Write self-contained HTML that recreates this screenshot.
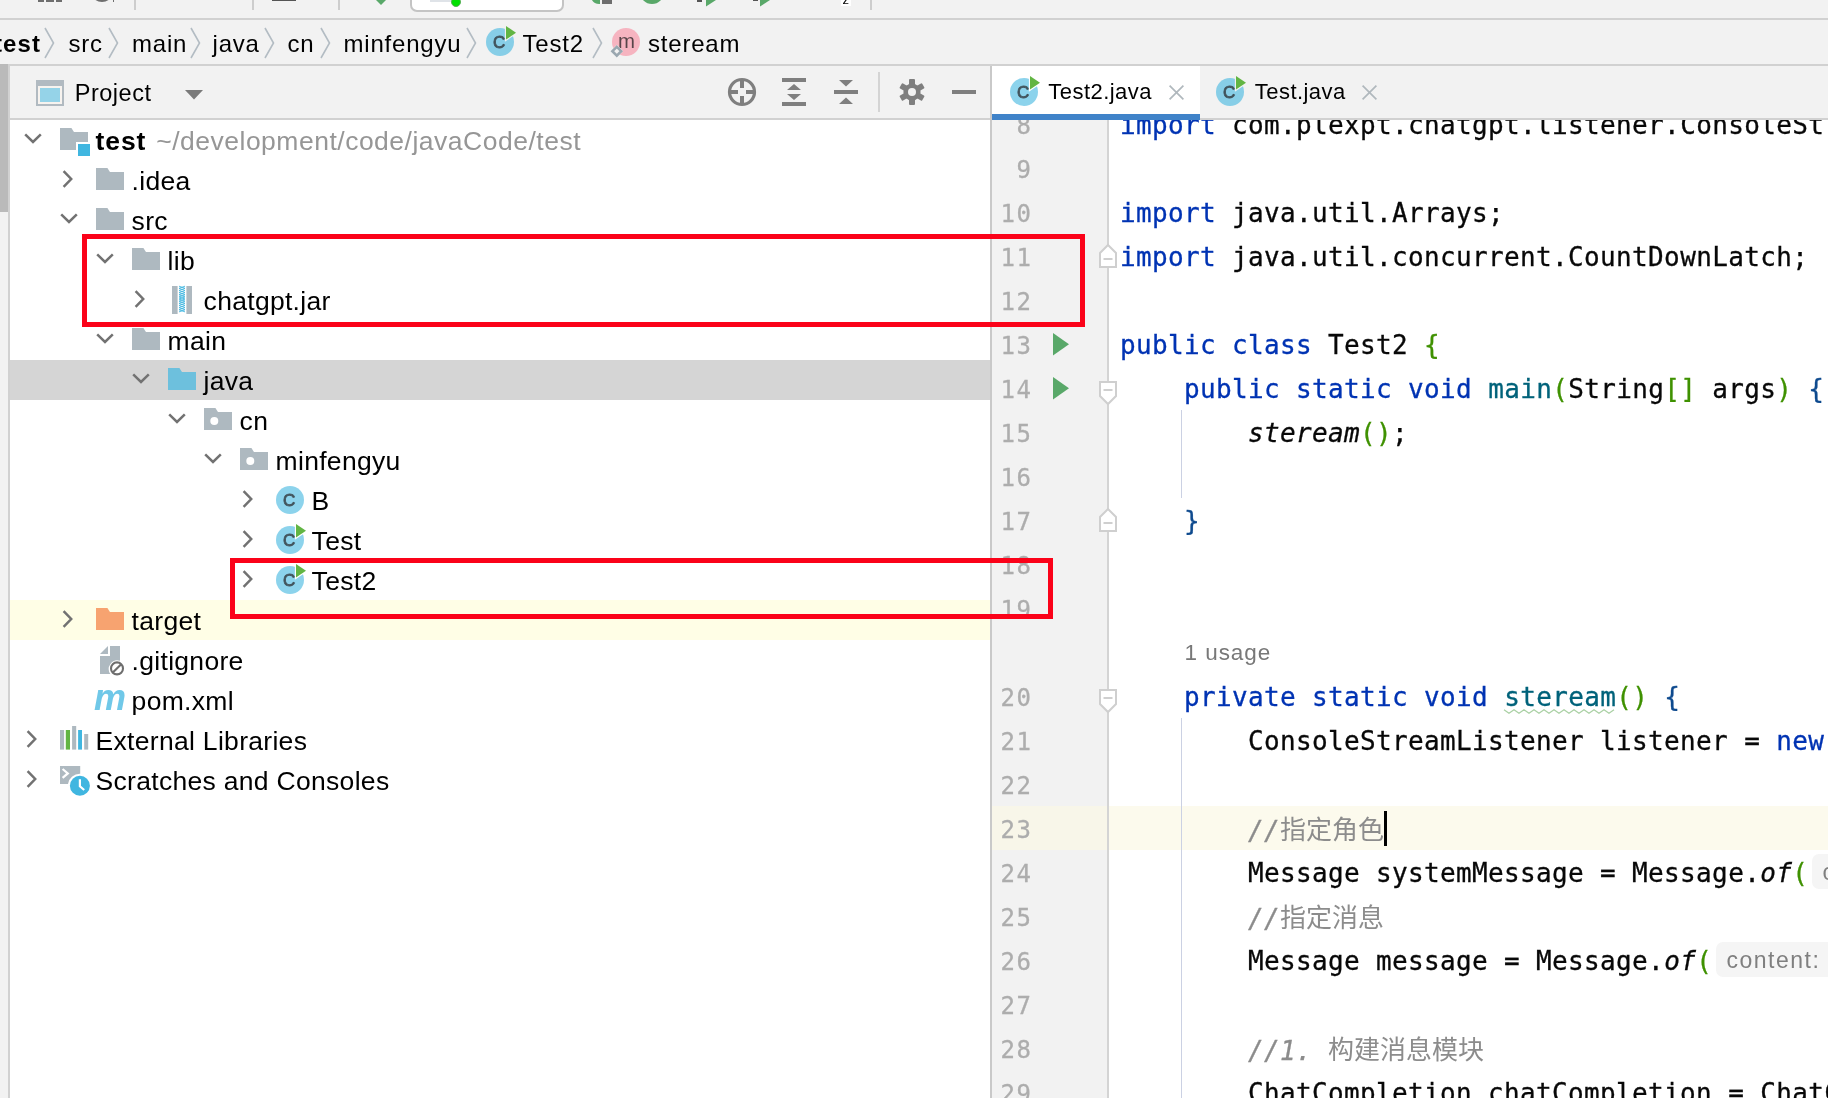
<!DOCTYPE html>
<html lang="zh"><head><meta charset="utf-8"><title>test – Test2.java</title>
<style>
*{box-sizing:border-box}
html,body{margin:0;padding:0}
body{width:1828px;height:1098px;overflow:hidden;background:#f2f2f2;position:relative;font-family:"Liberation Sans", "Noto Sans CJK SC", sans-serif;color:#000;-webkit-font-smoothing:antialiased}
.a{position:absolute}
.t{position:absolute;white-space:pre;line-height:1}
svg{position:absolute;overflow:visible}
#root{position:absolute;left:0;top:0;width:1828px;height:1098px;overflow:hidden;will-change:transform}
.tree{font-size:26px}
.bc{font-size:24px}
.code{position:absolute;left:1120px;height:44px;line-height:46px;white-space:pre;font-family:"DejaVu Sans Mono", "Liberation Mono", "Noto Sans CJK SC", monospace;font-size:26px;letter-spacing:.35px;color:#080808;-webkit-text-stroke:.3px}
.code i{font-style:oblique}
.k{color:#0033b3}.g{color:#3f9101}.b{color:#0e4a8e}.m{color:#00627a}.c{color:#8c8c8c;font-style:oblique}
.cj{font-family:"Noto Sans CJK SC",sans-serif;font-style:normal;letter-spacing:0;font-size:26px;position:relative;top:-1.5px;-webkit-text-stroke:0}
.ln{position:absolute;left:992px;width:40.5px;height:44px;line-height:48px;text-align:right;font-family:"DejaVu Sans Mono", "Liberation Mono", "Noto Sans CJK SC", monospace;font-size:24px;letter-spacing:1.55px;color:#adadad;-webkit-text-stroke:.3px}
.hint{position:absolute;height:35px;border-radius:7px;background:#f5f5f5;color:#7f7f7f;font-size:23px;line-height:36.5px;padding-left:10.5px;white-space:pre;letter-spacing:1.5px}
</style></head>
<body>
<div id="root">
<!-- main toolbar (cropped) -->
<div class="a" style="left:0px;top:18px;width:1828px;height:2px;background:#d1d1d1;"></div>
<div class="a" style="left:38px;top:0px;width:6px;height:2px;background:#6e6e6e;"></div>
<div class="a" style="left:46px;top:0px;width:8px;height:2px;background:#6e6e6e;"></div>
<div class="a" style="left:56px;top:0px;width:6px;height:2px;background:#6e6e6e;"></div>
<svg style="left:92px;top:-20px" width="20" height="24" viewBox="0 0 20 24"><circle cx="10" cy="11" r="9.6" fill="none" stroke="#6e6e6e" stroke-width="3"/></svg>
<div class="a" style="left:112.5px;top:0px;width:1.5px;height:1.5px;background:#6e6e6e;"></div>
<div class="a" style="left:134px;top:0px;width:2px;height:10px;background:#cdcdcd;"></div>
<div class="a" style="left:252px;top:0px;width:2px;height:10px;background:#cdcdcd;"></div>
<div class="a" style="left:338px;top:0px;width:2px;height:10px;background:#cdcdcd;"></div>
<div class="a" style="left:870px;top:0px;width:2px;height:10px;background:#cdcdcd;"></div>
<div class="a" style="left:272px;top:0px;width:24px;height:1px;background:#555;"></div>
<svg style="left:375px;top:-6px" width="12" height="11" viewBox="0 0 12 11"><path d="M0,5 L6,11 L12,5 Z" fill="#59a869"/></svg>
<div class="a" style="left:410px;top:-20px;width:154px;height:32px;border:2px solid #c4c4c4;border-radius:7px;background:#fff"></div>
<div class="a" style="left:430px;top:0px;width:26px;height:1.5px;background:#dfe3e8;"></div>
<div class="a" style="left:451px;top:-3px;width:10px;height:10px;border-radius:5px;background:#00e000;border:1px solid #58b058"></div>
<svg style="left:590px;top:-10px" width="12" height="15" viewBox="0 0 12 15"><path d="M10,0 V14 A9,9 0 0 1 1,8 Z" fill="#59a869"/></svg>
<div class="a" style="left:602px;top:0px;width:10px;height:4px;background:#6e6e6e;"></div>
<svg style="left:640px;top:-20px" width="24" height="24" viewBox="0 0 24 24"><circle cx="12" cy="12" r="12" fill="#59a869"/></svg>
<div class="a" style="left:697px;top:0px;width:5px;height:2px;background:#555;"></div>
<svg style="left:706px;top:-10px" width="10" height="17" viewBox="0 0 10 17"><path d="M0,0 L10,10 L0,16.5 Z" fill="#59a869"/></svg>
<div class="a" style="left:753px;top:0px;width:5px;height:1px;background:#555;"></div>
<svg style="left:760px;top:-10px" width="10" height="17" viewBox="0 0 10 17"><path d="M0,0 L10,10 L0,16.5 Z" fill="#59a869"/></svg>
<div class="a" style="left:841px;top:0px;width:10px;height:6px;background:#fff;"></div>
<span class="t" style="left:842.5px;top:-7.5px;font-size:13px">z</span>
<!-- navigation bar -->
<div class="a" style="left:0px;top:64px;width:1828px;height:2px;background:#d1d1d1;"></div>
<span class="t bc" style="left:-6px;top:31.68px;font-size:24px;font-weight:bold;letter-spacing:1.1px">test</span>
<svg style="left:44px;top:27px" width="11" height="32" viewBox="0 0 11 32"><path d="M1,1 L9.5,16 L1,31" fill="none" stroke="#b3bcc3" stroke-width="1.6"/></svg>
<span class="t " style="left:68.5px;top:31.68px;font-size:24px;letter-spacing:.8px">src</span>
<svg style="left:108px;top:27px" width="11" height="32" viewBox="0 0 11 32"><path d="M1,1 L9.5,16 L1,31" fill="none" stroke="#b3bcc3" stroke-width="1.6"/></svg>
<span class="t " style="left:132px;top:31.68px;font-size:24px;letter-spacing:.8px">main</span>
<svg style="left:190px;top:27px" width="11" height="32" viewBox="0 0 11 32"><path d="M1,1 L9.5,16 L1,31" fill="none" stroke="#b3bcc3" stroke-width="1.6"/></svg>
<span class="t " style="left:212.5px;top:31.68px;font-size:24px;letter-spacing:.8px">java</span>
<svg style="left:264px;top:27px" width="11" height="32" viewBox="0 0 11 32"><path d="M1,1 L9.5,16 L1,31" fill="none" stroke="#b3bcc3" stroke-width="1.6"/></svg>
<span class="t " style="left:287.5px;top:31.68px;font-size:24px;letter-spacing:.8px">cn</span>
<svg style="left:320px;top:27px" width="11" height="32" viewBox="0 0 11 32"><path d="M1,1 L9.5,16 L1,31" fill="none" stroke="#b3bcc3" stroke-width="1.6"/></svg>
<span class="t " style="left:343.5px;top:31.68px;font-size:24px;letter-spacing:.8px">minfengyu</span>
<svg style="left:466px;top:27px" width="11" height="32" viewBox="0 0 11 32"><path d="M1,1 L9.5,16 L1,31" fill="none" stroke="#b3bcc3" stroke-width="1.6"/></svg>
<svg style="left:484px;top:26px" width="32" height="32" viewBox="0 0 16 16"><circle cx="8" cy="8" r="7" fill="#40b6e0" fill-opacity=".6"/><text x="7.6" y="11.1" font-family="Liberation Sans,sans-serif" font-size="8.5" text-anchor="middle" fill="#231f20" stroke="#231f20" stroke-width=".42" opacity=".7">C</text><path d="M11,0 L16,3.4 L11,6.8 Z" fill="#f2f2f2" stroke="#f2f2f2" stroke-width="1.1"/><path d="M11,0 L16,3.4 L11,6.8 Z" fill="#62b543"/></svg>
<span class="t " style="left:522.5px;top:31.68px;font-size:24px;letter-spacing:.8px">Test2</span>
<svg style="left:592px;top:27px" width="11" height="32" viewBox="0 0 11 32"><path d="M1,1 L9.5,16 L1,31" fill="none" stroke="#b3bcc3" stroke-width="1.6"/></svg>
<svg style="left:610px;top:26px" width="32" height="32" viewBox="0 0 16 16"><circle cx="8" cy="8" r="7" fill="#f98b9e" fill-opacity=".6"/><text x="8.2" y="10.9" font-family="Liberation Sans,sans-serif" font-size="10.2" text-anchor="middle" fill="#231f20" fill-opacity=".75">m</text><path d="M3.4,9.4 L6.6,12.6 L3.4,15.8 L0.2,12.6 Z" fill="#f2f2f2"/><path d="M3.4,10.4 L5.6,12.6 L3.4,14.8 L1.2,12.6 Z" fill="none" stroke="#9aa7b0" stroke-width="1.3"/></svg>
<span class="t " style="left:648px;top:31.68px;font-size:24px;letter-spacing:.8px">steream</span>
<div class="a" style="left:0px;top:66px;width:8px;height:1032px;background:#f2f2f2;"></div>
<div class="a" style="left:0px;top:64px;width:8px;height:148px;background:#bababa;"></div>
<div class="a" style="left:8px;top:66px;width:2px;height:1032px;background:#d1d1d1;"></div>
<!-- project tool window -->
<div class="a" style="left:10px;top:66px;width:980px;height:52px;background:#f2f2f2;"></div>
<div class="a" style="left:10px;top:118px;width:980px;height:2px;background:#d1d1d1;"></div>
<div class="a" style="left:10px;top:120px;width:980px;height:978px;background:#fff;"></div>
<div class="a" style="left:990px;top:66px;width:2px;height:1032px;background:#c9c9c9;"></div>
<svg style="left:36px;top:80px" width="28" height="26" viewBox="0 0 28 26"><rect x="0" y="0" width="28" height="26" fill="#b1bac1"/><rect x="2" y="6" width="24" height="18" fill="#f7f3ef"/><rect x="4" y="8" width="20" height="14" fill="#95d3e8"/></svg>
<span class="t " style="left:74.8px;top:81.71px;font-size:23.5px;letter-spacing:.5px">Project</span>
<svg style="left:185px;top:90.3px" width="18" height="10" viewBox="0 0 18 10"><path d="M0,0 H18 L9,9.5 Z" fill="#7a7a7a"/></svg>
<svg style="left:726px;top:76px" width="32" height="32" viewBox="0 0 32 32"><circle cx="16" cy="16" r="12.5" fill="none" stroke="#7f7f7f" stroke-width="3.2"/><path d="M16,4 V12 M16,20 V28 M4,16 H12 M20,16 H28" stroke="#7f7f7f" stroke-width="4" fill="none"/></svg>
<svg style="left:782px;top:78px" width="24" height="28" viewBox="0 0 24 28"><rect x="0" y="0" width="24" height="4" fill="#7f7f7f"/><rect x="0" y="24" width="24" height="4" fill="#7f7f7f"/><path d="M12,6 L19,12 H5 Z M5,16 H19 L12,22 Z" fill="#7f7f7f"/></svg>
<svg style="left:834px;top:80px" width="24" height="24" viewBox="0 0 24 24"><rect x="0" y="10" width="24" height="4" fill="#7f7f7f"/><path d="M5,0 H19 L12,6.5 Z M12,17.5 L19,24 H5 Z" fill="#7f7f7f"/></svg>
<div class="a" style="left:878px;top:72px;width:2px;height:40px;background:#d4d4d4;"></div>
<svg style="left:899px;top:79px" width="26" height="26" viewBox="0 0 26 26"><g fill="#7f7f7f"><circle cx="13" cy="13" r="8.6"/><rect x="10" y="0" width="6" height="8" rx="1" transform="rotate(0 13 13)"/><rect x="10" y="0" width="6" height="8" rx="1" transform="rotate(60 13 13)"/><rect x="10" y="0" width="6" height="8" rx="1" transform="rotate(120 13 13)"/><rect x="10" y="0" width="6" height="8" rx="1" transform="rotate(180 13 13)"/><rect x="10" y="0" width="6" height="8" rx="1" transform="rotate(240 13 13)"/><rect x="10" y="0" width="6" height="8" rx="1" transform="rotate(300 13 13)"/></g><circle cx="13" cy="13" r="4" fill="#f2f2f2"/></svg>
<div class="a" style="left:952px;top:90px;width:24px;height:4px;background:#7f7f7f;"></div>
<svg style="left:24px;top:132.8px" width="18" height="12" viewBox="0 0 18 12"><path d="M1.2,1.4 L9,9 L16.8,1.4" fill="none" stroke="#727272" stroke-width="2.5"/></svg>
<svg style="left:58px;top:124px" width="32" height="32" viewBox="0 0 16 16"><path d="M1,13 H9 V9 H15 V4 H7.985 L6.697,2 H1 Z" fill="#9aa7b0" fill-opacity=".8"/><rect x="10" y="10" width="6" height="6" fill="#40b6e0"/></svg>
<span class="t tree" style="left:95.6px;top:127.77px;font-size:26.5px;letter-spacing:.3px"><b style="letter-spacing:.9px">test</b><span style="color:#969696;letter-spacing:.5px;margin-left:2px"> ~/development/code/javaCode/test</span></span>
<svg style="left:62px;top:170.2px" width="12" height="18" viewBox="0 0 12 18"><path d="M1.6,1.2 L9.2,9 L1.6,16.8" fill="none" stroke="#727272" stroke-width="2.5"/></svg>
<svg style="left:94px;top:164px" width="32" height="32" viewBox="0 0 16 16"><path d="M1,13 H15 V4 H7.985 L6.697,2 H1 Z" fill="#9aa7b0" fill-opacity=".8"/></svg>
<span class="t tree" style="left:131.6px;top:167.77px;font-size:26.5px;letter-spacing:.3px">.idea</span>
<svg style="left:60px;top:212.8px" width="18" height="12" viewBox="0 0 18 12"><path d="M1.2,1.4 L9,9 L16.8,1.4" fill="none" stroke="#727272" stroke-width="2.5"/></svg>
<svg style="left:94px;top:204px" width="32" height="32" viewBox="0 0 16 16"><path d="M1,13 H15 V4 H7.985 L6.697,2 H1 Z" fill="#9aa7b0" fill-opacity=".8"/></svg>
<span class="t tree" style="left:131.6px;top:207.77px;font-size:26.5px;letter-spacing:.3px">src</span>
<svg style="left:96px;top:252.8px" width="18" height="12" viewBox="0 0 18 12"><path d="M1.2,1.4 L9,9 L16.8,1.4" fill="none" stroke="#727272" stroke-width="2.5"/></svg>
<svg style="left:130px;top:244px" width="32" height="32" viewBox="0 0 16 16"><path d="M1,13 H15 V4 H7.985 L6.697,2 H1 Z" fill="#9aa7b0" fill-opacity=".8"/></svg>
<span class="t tree" style="left:167.6px;top:247.77px;font-size:26.5px;letter-spacing:.3px">lib</span>
<svg style="left:134px;top:290.2px" width="12" height="18" viewBox="0 0 12 18"><path d="M1.6,1.2 L9.2,9 L1.6,16.8" fill="none" stroke="#727272" stroke-width="2.5"/></svg>
<svg style="left:166px;top:284px" width="32" height="32" viewBox="0 0 16 16"><rect x="3" y="1" width="2.8" height="14" fill="#9aa7b0" fill-opacity=".8"/><rect x="10.2" y="1" width="2.8" height="14" fill="#9aa7b0" fill-opacity=".8"/><path d="M6.50,1.10 L9.50,2.17 L6.50,3.24 L9.50,4.31 L6.50,5.38 L9.50,6.45 L6.50,7.52 L9.50,8.59 L6.50,9.66 L9.50,10.73 L6.50,11.80 L9.50,12.87 L6.50,13.94 M9.50,1.10 L6.50,2.17 L9.50,3.24 L6.50,4.31 L9.50,5.38 L6.50,6.45 L9.50,7.52 L6.50,8.59 L9.50,9.66 L6.50,10.73 L9.50,11.80 L6.50,12.87 L9.50,13.94" fill="none" stroke="#40b6e0" stroke-width=".45"/></svg>
<span class="t tree" style="left:203.6px;top:287.77px;font-size:26.5px;letter-spacing:.3px">chatgpt.jar</span>
<svg style="left:96px;top:332.8px" width="18" height="12" viewBox="0 0 18 12"><path d="M1.2,1.4 L9,9 L16.8,1.4" fill="none" stroke="#727272" stroke-width="2.5"/></svg>
<svg style="left:130px;top:324px" width="32" height="32" viewBox="0 0 16 16"><path d="M1,13 H15 V4 H7.985 L6.697,2 H1 Z" fill="#9aa7b0" fill-opacity=".8"/></svg>
<span class="t tree" style="left:167.6px;top:327.77px;font-size:26.5px;letter-spacing:.3px">main</span>
<div class="a" style="left:10px;top:360px;width:980px;height:40px;background:#d5d5d5;"></div>
<svg style="left:132px;top:372.8px" width="18" height="12" viewBox="0 0 18 12"><path d="M1.2,1.4 L9,9 L16.8,1.4" fill="none" stroke="#727272" stroke-width="2.5"/></svg>
<svg style="left:166px;top:364px" width="32" height="32" viewBox="0 0 16 16"><path d="M1,13 H15 V4 H7.985 L6.697,2 H1 Z" fill="#40b6e0" fill-opacity=".7"/></svg>
<span class="t tree" style="left:203.6px;top:367.77px;font-size:26.5px;letter-spacing:.3px">java</span>
<svg style="left:168px;top:412.8px" width="18" height="12" viewBox="0 0 18 12"><path d="M1.2,1.4 L9,9 L16.8,1.4" fill="none" stroke="#727272" stroke-width="2.5"/></svg>
<svg style="left:202px;top:404px" width="32" height="32" viewBox="0 0 16 16"><path d="M1,13 H15 V4 H7.985 L6.697,2 H1 Z" fill="#9aa7b0" fill-opacity=".8"/><circle cx="6.15" cy="8.5" r="2" fill="#fff"/></svg>
<span class="t tree" style="left:239.6px;top:407.77px;font-size:26.5px;letter-spacing:.3px">cn</span>
<svg style="left:204px;top:452.8px" width="18" height="12" viewBox="0 0 18 12"><path d="M1.2,1.4 L9,9 L16.8,1.4" fill="none" stroke="#727272" stroke-width="2.5"/></svg>
<svg style="left:238px;top:444px" width="32" height="32" viewBox="0 0 16 16"><path d="M1,13 H15 V4 H7.985 L6.697,2 H1 Z" fill="#9aa7b0" fill-opacity=".8"/><circle cx="6.15" cy="8.5" r="2" fill="#fff"/></svg>
<span class="t tree" style="left:275.6px;top:447.77px;font-size:26.5px;letter-spacing:.3px">minfengyu</span>
<svg style="left:242px;top:490.2px" width="12" height="18" viewBox="0 0 12 18"><path d="M1.6,1.2 L9.2,9 L1.6,16.8" fill="none" stroke="#727272" stroke-width="2.5"/></svg>
<svg style="left:274px;top:484px" width="32" height="32" viewBox="0 0 16 16"><circle cx="8" cy="8" r="7" fill="#40b6e0" fill-opacity=".6"/><text x="7.6" y="11.1" font-family="Liberation Sans,sans-serif" font-size="8.5" text-anchor="middle" fill="#231f20" stroke="#231f20" stroke-width=".42" opacity=".7">C</text></svg>
<span class="t tree" style="left:311.6px;top:487.77px;font-size:26.5px;letter-spacing:.3px">B</span>
<svg style="left:242px;top:530.2px" width="12" height="18" viewBox="0 0 12 18"><path d="M1.6,1.2 L9.2,9 L1.6,16.8" fill="none" stroke="#727272" stroke-width="2.5"/></svg>
<svg style="left:274px;top:524px" width="32" height="32" viewBox="0 0 16 16"><circle cx="8" cy="8" r="7" fill="#40b6e0" fill-opacity=".6"/><text x="7.6" y="11.1" font-family="Liberation Sans,sans-serif" font-size="8.5" text-anchor="middle" fill="#231f20" stroke="#231f20" stroke-width=".42" opacity=".7">C</text><path d="M11,0 L16,3.4 L11,6.8 Z" fill="#fff" stroke="#fff" stroke-width="1.1"/><path d="M11,0 L16,3.4 L11,6.8 Z" fill="#62b543"/></svg>
<span class="t tree" style="left:311.6px;top:527.77px;font-size:26.5px;letter-spacing:.3px">Test</span>
<svg style="left:242px;top:570.2px" width="12" height="18" viewBox="0 0 12 18"><path d="M1.6,1.2 L9.2,9 L1.6,16.8" fill="none" stroke="#727272" stroke-width="2.5"/></svg>
<svg style="left:274px;top:564px" width="32" height="32" viewBox="0 0 16 16"><circle cx="8" cy="8" r="7" fill="#40b6e0" fill-opacity=".6"/><text x="7.6" y="11.1" font-family="Liberation Sans,sans-serif" font-size="8.5" text-anchor="middle" fill="#231f20" stroke="#231f20" stroke-width=".42" opacity=".7">C</text><path d="M11,0 L16,3.4 L11,6.8 Z" fill="#fff" stroke="#fff" stroke-width="1.1"/><path d="M11,0 L16,3.4 L11,6.8 Z" fill="#62b543"/></svg>
<span class="t tree" style="left:311.6px;top:567.77px;font-size:26.5px;letter-spacing:.3px">Test2</span>
<div class="a" style="left:10px;top:600px;width:980px;height:40px;background:#fffee6;"></div>
<svg style="left:62px;top:610.2px" width="12" height="18" viewBox="0 0 12 18"><path d="M1.6,1.2 L9.2,9 L1.6,16.8" fill="none" stroke="#727272" stroke-width="2.5"/></svg>
<svg style="left:94px;top:604px" width="32" height="32" viewBox="0 0 16 16"><path d="M1,13 H15 V4 H7.985 L6.697,2 H1 Z" fill="#f26522" fill-opacity=".6"/></svg>
<span class="t tree" style="left:131.6px;top:607.77px;font-size:26.5px;letter-spacing:.3px">target</span>
<svg style="left:94px;top:644px" width="32" height="32" viewBox="0 0 16 16"><path d="M7,1 L3,5 H7 Z" fill="#9aa7b0" fill-opacity=".8"/><path d="M8,1 V6 H3 V15 H8.2 A4.3,4.3 0 0 1 13,8.4 V1 Z" fill="#9aa7b0" fill-opacity=".8"/><circle cx="11.5" cy="12.2" r="3" fill="none" stroke="#6e6e6e" stroke-width="1.05"/><path d="M9.4,14.3 L13.6,10.1" stroke="#6e6e6e" stroke-width="1.05"/></svg>
<span class="t tree" style="left:131.6px;top:647.77px;font-size:26.5px;letter-spacing:.3px">.gitignore</span>
<svg style="left:94px;top:684px" width="32" height="32" viewBox="0 0 16 16"><text x="8" y="13.05" font-family="Liberation Sans,sans-serif" font-size="18" font-weight="bold" font-style="italic" text-anchor="middle" fill="#40b6e0" fill-opacity=".75">m</text></svg>
<span class="t tree" style="left:131.6px;top:687.77px;font-size:26.5px;letter-spacing:.3px">pom.xml</span>
<svg style="left:26px;top:730.2px" width="12" height="18" viewBox="0 0 12 18"><path d="M1.6,1.2 L9.2,9 L1.6,16.8" fill="none" stroke="#727272" stroke-width="2.5"/></svg>
<svg style="left:58px;top:724px" width="32" height="32" viewBox="0 0 16 16"><rect x="1" y="3" width="2.05" height="9.8" fill="#9aa7b0" fill-opacity=".8"/><rect x="3.9" y="3" width="2.1" height="9.8" fill="#62b543"/><rect x="7.05" y="1" width="2.05" height="11.8" fill="#9aa7b0" fill-opacity=".8"/><rect x="10.05" y="3" width="1.95" height="9.8" fill="#40b6e0"/><rect x="13.1" y="5" width="2" height="7.8" fill="#9aa7b0" fill-opacity=".8"/></svg>
<span class="t tree" style="left:95.6px;top:727.77px;font-size:26.5px;letter-spacing:.3px">External Libraries</span>
<svg style="left:26px;top:770.2px" width="12" height="18" viewBox="0 0 12 18"><path d="M1.6,1.2 L9.2,9 L1.6,16.8" fill="none" stroke="#727272" stroke-width="2.5"/></svg>
<svg style="left:58px;top:764px" width="32" height="32" viewBox="0 0 16 16"><path d="M1,1 H11.1 V4.9 A6,6 0 0 0 5,10 H1 Z" fill="#9aa7b0" fill-opacity=".8"/><path d="M2.3,2.5 L4.9,4.7 L2.3,6.9" fill="none" stroke="#fff" stroke-width="1.1"/><circle cx="10.95" cy="10.9" r="5" fill="#40b6e0"/><path d="M10.95,7.6 V11.1 L13.1,13" fill="none" stroke="#fff" stroke-width="1.1"/></svg>
<span class="t tree" style="left:95.6px;top:767.77px;font-size:26.5px;letter-spacing:.3px">Scratches and Consoles</span>
<!-- editor -->
<div class="a" style="left:992px;top:66px;width:836px;height:52px;background:#f2f2f2;"></div>
<div class="a" style="left:992px;top:120px;width:836px;height:978px;background:#fff;"></div>
<div class="a" style="left:992px;top:120px;width:115px;height:978px;background:#f2f2f2;"></div>
<div class="a" style="left:1107px;top:120px;width:2px;height:978px;background:#d4d4d4;"></div>
<div class="a" style="left:992px;top:806px;width:115px;height:44px;background:#f8f6e9;"></div>
<div class="a" style="left:1109px;top:806px;width:719px;height:44px;background:#fcfaed;"></div>
<div class="a" style="left:1180.5px;top:410px;width:1.5px;height:88px;background:#cbd1e3;"></div>
<div class="a" style="left:1180.5px;top:718px;width:1.5px;height:380px;background:#cbd1e3;"></div>
<div class="ln" style="top:102px">8</div><div class="code" style="top:102px"><span class="k">import</span> com.plexpt.chatgpt.listener.ConsoleStreamListener;</div>
<div class="ln" style="top:146px">9</div><div class="ln" style="top:190px">10</div><div class="code" style="top:190px"><span class="k">import</span> java.util.Arrays;</div>
<div class="ln" style="top:234px">11</div><div class="code" style="top:234px"><span class="k">import</span> java.util.concurrent.CountDownLatch;</div>
<div class="ln" style="top:278px">12</div><div class="ln" style="top:322px">13</div><div class="code" style="top:322px"><span class="k">public</span> <span class="k">class</span> Test2 <span class="g">{</span></div>
<div class="ln" style="top:366px">14</div><div class="code" style="top:366px">    <span class="k">public</span> <span class="k">static</span> <span class="k">void</span> <span class="m">main</span><span class="g">(</span>String<span class="g">[]</span> args<span class="g">)</span> <span class="b">{</span></div>
<div class="ln" style="top:410px">15</div><div class="code" style="top:410px">        <i>steream</i><span class="g">()</span>;</div>
<div class="ln" style="top:454px">16</div><div class="ln" style="top:498px">17</div><div class="code" style="top:498px">    <span class="b">}</span></div>
<div class="ln" style="top:542px">18</div><div class="ln" style="top:586px">19</div><div class="ln" style="top:674px">20</div><div class="code" style="top:674px">    <span class="k">private</span> <span class="k">static</span> <span class="k">void</span> <span class="m" id="typo">steream</span><span class="g">()</span> <span class="b">{</span></div>
<div class="ln" style="top:718px">21</div><div class="code" style="top:718px">        ConsoleStreamListener listener = <span class="k">new</span> ConsoleStreamListener<span class="g">()</span>;</div>
<div class="ln" style="top:762px">22</div><div class="ln" style="top:806px">23</div><div class="code" style="top:806px">        <span class="c">//<span class="cj">指定角色</span></span></div>
<div class="ln" style="top:850px">24</div><div class="code" style="top:850px">        Message systemMessage = Message.<i>of</i><span class="g">(</span></div>
<div class="ln" style="top:894px">25</div><div class="code" style="top:894px">        <span class="c">//<span class="cj">指定消息</span></span></div>
<div class="ln" style="top:938px">26</div><div class="code" style="top:938px">        Message message = Message.<i>of</i><span class="g">(</span></div>
<div class="ln" style="top:982px">27</div><div class="ln" style="top:1026px">28</div><div class="code" style="top:1026px">        <span class="c">//1. <span class="cj">构建消息模块</span></span></div>
<div class="ln" style="top:1070px">29</div><div class="code" style="top:1070px">        ChatCompletion chatCompletion = ChatCompletion.<i>builder</i><span class="g">()</span></div>
<span class="t " style="left:1184.5px;top:642.25px;font-size:22.5px;color:#787878;letter-spacing:.95px">1 usage</span>
<svg style="left:1504px;top:709px" width="112" height="5" viewBox="0 0 112 5"><path d="M0.0,0.7 L5.0,4.3 L10.0,0.7 L15.0,4.3 L20.0,0.7 L25.0,4.3 L30.0,0.7 L35.0,4.3 L40.0,0.7 L45.0,4.3 L50.0,0.7 L55.0,4.3 L60.0,0.7 L65.0,4.3 L70.0,0.7 L75.0,4.3 L80.0,0.7 L85.0,4.3 L90.0,0.7 L95.0,4.3 L100.0,0.7 L105.0,4.3 L110.0,0.7" fill="none" stroke="#a9d0a3" stroke-width="1.2"/></svg>
<div class="a" style="left:1384px;top:811px;width:3px;height:35px;background:#000;"></div>
<div class="hint" style="left:1812px;top:854px;width:120px">content:</div>
<div class="hint" style="left:1716px;top:942px;width:140px">content:</div>
<svg style="left:1053px;top:333px" width="16" height="23" viewBox="0 0 16 23"><path d="M0,0 L16,11.2 L0,22.4 Z" fill="#59a869"/></svg>
<svg style="left:1053px;top:377px" width="16" height="23" viewBox="0 0 16 23"><path d="M0,0 L16,11.2 L0,22.4 Z" fill="#59a869"/></svg>
<svg style="left:1098px;top:242.5px" width="20" height="26" viewBox="0 0 20 26"><path d="M2,24 V10 L10,2 L18,10 V24 Z" fill="#fff" stroke="#cfcfcf" stroke-width="2"/><path d="M5.5,16 H14.5" stroke="#cfcfcf" stroke-width="2"/></svg>
<svg style="left:1098px;top:380.2px" width="20" height="26" viewBox="0 0 20 26"><path d="M2,2 V16 L10,24 L18,16 V2 Z" fill="#fff" stroke="#cfcfcf" stroke-width="2"/><path d="M5.5,10 H14.5" stroke="#cfcfcf" stroke-width="2"/></svg>
<svg style="left:1098px;top:506.5px" width="20" height="26" viewBox="0 0 20 26"><path d="M2,24 V10 L10,2 L18,10 V24 Z" fill="#fff" stroke="#cfcfcf" stroke-width="2"/><path d="M5.5,16 H14.5" stroke="#cfcfcf" stroke-width="2"/></svg>
<svg style="left:1098px;top:688.2px" width="20" height="26" viewBox="0 0 20 26"><path d="M2,2 V16 L10,24 L18,16 V2 Z" fill="#fff" stroke="#cfcfcf" stroke-width="2"/><path d="M5.5,10 H14.5" stroke="#cfcfcf" stroke-width="2"/></svg>
<div class="a" style="left:992px;top:66px;width:836px;height:52px;background:#f2f2f2;"></div>
<div class="a" style="left:992px;top:118px;width:836px;height:2px;background:#d1d1d1;"></div>
<div class="a" style="left:992px;top:66px;width:208px;height:48px;background:#fff;"></div>
<div class="a" style="left:992px;top:114px;width:208px;height:6px;background:#4083c9;"></div>
<svg style="left:1008px;top:76px" width="32" height="32" viewBox="0 0 16 16"><circle cx="8" cy="8" r="7" fill="#40b6e0" fill-opacity=".6"/><text x="7.6" y="11.1" font-family="Liberation Sans,sans-serif" font-size="8.5" text-anchor="middle" fill="#231f20" stroke="#231f20" stroke-width=".42" opacity=".7">C</text><path d="M11,0 L16,3.4 L11,6.8 Z" fill="#fff" stroke="#fff" stroke-width="1.1"/><path d="M11,0 L16,3.4 L11,6.8 Z" fill="#62b543"/></svg>
<span class="t " style="left:1048.3px;top:81.18px;font-size:22px;letter-spacing:.45px">Test2.java</span>
<svg style="left:1169px;top:84.5px" width="15" height="15" viewBox="0 0 15 15"><path d="M0.6,0.6 L14.4,14.4 M14.4,0.6 L0.6,14.4" stroke="#b0b8bd" stroke-width="1.7" fill="none"/></svg>
<svg style="left:1214px;top:76px" width="32" height="32" viewBox="0 0 16 16"><circle cx="8" cy="8" r="7" fill="#40b6e0" fill-opacity=".6"/><text x="7.6" y="11.1" font-family="Liberation Sans,sans-serif" font-size="8.5" text-anchor="middle" fill="#231f20" stroke="#231f20" stroke-width=".42" opacity=".7">C</text><path d="M11,0 L16,3.4 L11,6.8 Z" fill="#f2f2f2" stroke="#f2f2f2" stroke-width="1.1"/><path d="M11,0 L16,3.4 L11,6.8 Z" fill="#62b543"/></svg>
<span class="t " style="left:1254.8px;top:81.18px;font-size:22px;letter-spacing:.45px">Test.java</span>
<svg style="left:1362px;top:84.5px" width="15" height="15" viewBox="0 0 15 15"><path d="M0.6,0.6 L14.4,14.4 M14.4,0.6 L0.6,14.4" stroke="#b0b8bd" stroke-width="1.7" fill="none"/></svg>
<div class="a" style="left:82px;top:234px;width:1003px;height:93px;border:5px solid #fb0219"></div>
<div class="a" style="left:230px;top:558px;width:823px;height:61px;border:5px solid #fb0219"></div>
</div>
</body></html>
